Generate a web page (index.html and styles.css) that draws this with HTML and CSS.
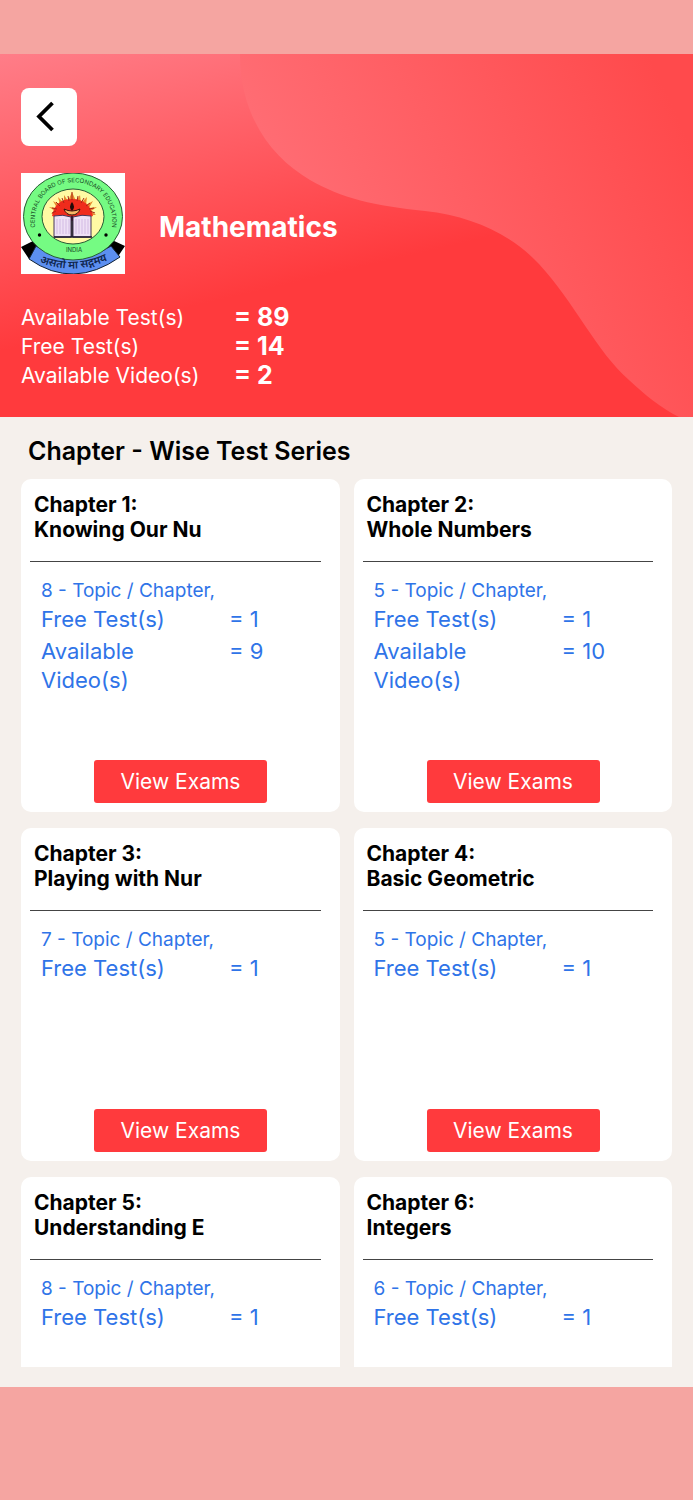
FILE: index.html
```
<!DOCTYPE html>
<html lang="en">
<head>
<meta charset="utf-8">
<meta name="viewport" content="width=device-width, initial-scale=1">
<title>Mathematics</title>
<link rel="stylesheet" href="styles.css">
</head>
<body>
<header class="hero">
  <svg class="hero-art" viewBox="0 0 693 363" preserveAspectRatio="none" aria-hidden="true">
    <defs>
      <linearGradient id="base" gradientUnits="userSpaceOnUse" x1="0" y1="0" x2="66" y2="282">
        <stop offset="0" stop-color="#ff7d88"/><stop offset="1" stop-color="#ff3a3d"/>
      </linearGradient>
      <linearGradient id="wave" gradientUnits="userSpaceOnUse" x1="290" y1="140" x2="640" y2="-20">
        <stop offset="0" stop-color="#ff6c73"/><stop offset="1" stop-color="#ff4a4c"/>
      </linearGradient>
    </defs>
    <path fill="url(#base)" d="M0 0H693V363H0Z"/>
    <path fill="url(#wave)" d="M240 0C240 65 274 105 310 126C341 144 375 152 425 157C472 162 512 181 539 210C575 249 596 297 629 326C645 341 661 354 679 363H693V0Z"/>
  </svg>
  <button class="back" type="button" aria-label="Back">
    <svg viewBox="0 0 56 58" aria-hidden="true"><path d="M31.500 15L18 28.500L31.500 42" fill="none" stroke="#000" stroke-width="3.800"/></svg>
  </button>
  <div class="subject">
    <svg class="crest" viewBox="0 0 104 101" role="img" aria-label="Central Board of Secondary Education">
      <defs>
        <path id="arc" d="M14 55C8 -6 97 -6 91 55"/>
        <path id="ribbon" d="M15 88Q52 104 90 86"/>
      </defs>
      <path fill="#fff" d="M0 0H104V101H0Z"/>
      <path d="M0 74L14 67L20 82L8 86ZM104 73L91 67L84 82L96 85Z"/>
      <path d="M15 73Q52 98 90 73L99 84Q52 117 8 86Z" fill="#5c8ff0" stroke="#123" stroke-width="1"/>
      <ellipse cx="52" cy="43.500" rx="49.500" ry="43.500" fill="#75fb83" stroke="#285b35" stroke-width="1"/>
      <ellipse cx="52" cy="43.500" rx="31" ry="27.500" fill="#fffaa4" stroke="#285b35" stroke-width="1"/>
      <path d="M30 41L34 38L28 34L36 35L32 28L39 32L37 24L43 30L43 22L47 28L51 19L55 28L59 22L60 30L66 24L65 32L72 28L68 35L76 34L70 38L75 42Z" fill="#e88a2f"/>
      <path d="M31 43Q34 26 51 26T72 43L52 48Z" fill="#f02b1c"/>
      <path d="M31 40L35 38M31 35L36 36M35 29L39 33M41 25L43 30M47 23L48 28M51 19V27M57 23L56 28M63 25L60 30M69 30L65 33M73 35L68 36M74 40L69 38" stroke="#a62616" stroke-width="1"/>
      <path d="M43 36Q51 40 59 36Q57 42 51 42T43 36Z" fill="#f7b866" stroke="#32120a" stroke-width="1"/>
      <path d="M51 29Q55 34 51 38Q47 34 51 29Z" fill="#210a08"/>
      <path d="M33 43Q42 41 50 44V64H33ZM52 44Q61 41 70 43V64H52Z" fill="#eee0f5" stroke="#453457" stroke-width="1"/>
      <path d="M36 46V61M39 46V61M42 46V61M45 46V61M48 46V61M55 46V61M58 46V61M61 46V61M64 46V61M67 46V61" stroke="#c5a9dd" stroke-width=".7"/>
      <path d="M51 43V64M33 64H71" stroke="#1c1730" stroke-width="1.600"/>
      <circle cx="18.500" cy="62" r="1.700"/><circle cx="85" cy="62" r="1.700"/>
      <text class="crest-text"><textPath href="#arc" startOffset="50%" text-anchor="middle">CENTRAL BOARD OF SECONDARY EDUCATION</textPath></text>
      <text class="crest-text" x="53" y="79" text-anchor="middle">INDIA</text>
      <text class="crest-motto"><textPath href="#ribbon" startOffset="50%" text-anchor="middle">असतो मा सद्गमय</textPath></text>
    </svg>
    <h1 class="subject-name">Mathematics</h1>
  </div>
  <dl class="stats">
    <dt>Available Test(s)</dt><dd>= 89</dd>
    <dt>Free Test(s)</dt><dd>= 14</dd>
    <dt>Available Video(s)</dt><dd>= 2</dd>
  </dl>
</header>
<main class="content">
  <h2 class="section-title">Chapter - Wise Test Series</h2>
  <div class="chapters">
    <article class="card">
      <h3 class="card-title">Chapter 1:<br>Knowing Our Nu</h3>
      <p class="topics">8 - Topic / Chapter,</p>
      <dl class="facts"><dt>Free Test(s)</dt><dd>= 1</dd><dt>Available Video(s)</dt><dd>= 9</dd></dl>
      <button class="view" type="button">View Exams</button>
    </article>
    <article class="card">
      <h3 class="card-title">Chapter 2:<br>Whole Numbers</h3>
      <p class="topics">5 - Topic / Chapter,</p>
      <dl class="facts"><dt>Free Test(s)</dt><dd>= 1</dd><dt>Available Video(s)</dt><dd>= 10</dd></dl>
      <button class="view" type="button">View Exams</button>
    </article>
    <article class="card">
      <h3 class="card-title">Chapter 3:<br>Playing with Nur</h3>
      <p class="topics">7 - Topic / Chapter,</p>
      <dl class="facts"><dt>Free Test(s)</dt><dd>= 1</dd></dl>
      <button class="view" type="button">View Exams</button>
    </article>
    <article class="card">
      <h3 class="card-title">Chapter 4:<br>Basic Geometric</h3>
      <p class="topics">5 - Topic / Chapter,</p>
      <dl class="facts"><dt>Free Test(s)</dt><dd>= 1</dd></dl>
      <button class="view" type="button">View Exams</button>
    </article>
    <article class="card">
      <h3 class="card-title">Chapter 5:<br>Understanding E</h3>
      <p class="topics">8 - Topic / Chapter,</p>
      <dl class="facts"><dt>Free Test(s)</dt><dd>= 1</dd></dl>
    </article>
    <article class="card">
      <h3 class="card-title">Chapter 6:<br>Integers</h3>
      <p class="topics">6 - Topic / Chapter,</p>
      <dl class="facts"><dt>Free Test(s)</dt><dd>= 1</dd></dl>
    </article>
  </div>
</main>
</body>
</html>
```
FILE: styles.css
```
* { box-sizing: border-box; }
body {
  margin: 0;
  height: 100vh;
  padding: 54px 0 113px;
  display: flex;
  flex-direction: column;
  background: #f5a5a1;
  color: #000;
  font-family: Inter, "Liberation Sans", sans-serif;
}
h1, h2, h3, p, dl, dd { margin: 0; }
button { border: 0; padding: 0; font: inherit; cursor: pointer; }

.hero {
  position: relative;
  flex: none;
  padding: 34px 21px 27px;
  color: #fff;
  isolation: isolate;
}
.hero-art { position: absolute; inset: 0; width: 100%; height: 100%; z-index: -1; }
.back { display: block; width: 56px; height: 58px; border-radius: 8px; background: #fff; }
.back svg { display: block; width: 100%; }
.subject { display: flex; align-items: center; gap: 34px; margin-top: 27px; }
.crest { flex: none; width: 104px; height: 101px; }
.crest-text { font-size: 6px; fill: #174a25; }
.crest-motto { font-family: "Noto Sans", "Noto Sans Devanagari", sans-serif; font-size: 11px; font-weight: 600; fill: #10264e; }
.subject-name { padding-top: 7px; font-size: 28px; line-height: 34px; font-weight: 700; }
.stats { display: grid; grid-template-columns: 213px 1fr; margin-top: 29px; line-height: 29px; }
.stats dt { font-size: 21px; font-weight: 400; }
.stats dd { font-size: 25px; font-weight: 700; }

.content {
  flex: 1;
  min-height: 0;
  display: flex;
  flex-direction: column;
  padding: 19px 21px 20px;
  background: #f5f0ec;
}
.section-title { margin: 0 7px 13px; font-size: 25px; line-height: 30px; font-weight: 600; }
.chapters {
  flex: 1;
  min-height: 0;
  overflow: hidden;
  display: grid;
  grid-template-columns: 1fr 1fr;
  grid-auto-rows: 333px;
  gap: 16px 14px;
}
.card {
  display: flex;
  flex-direction: column;
  padding: 13px 19px 9px 9px;
  border-radius: 10px;
  background: #fff;
}
.card-title {
  padding-left: 4px;
  font-size: 21px;
  line-height: 25px;
  font-weight: 700;
}
.topics {
  margin-top: 19px;
  padding: 15px 0 0 11px;
  border-top: 1px solid #444;
  color: #2f74e8;
  font-size: 19px;
  line-height: 28px;
}
.facts {
  display: grid;
  grid-template-columns: 136px 1fr;
  column-gap: 52px;
  row-gap: 3px;
  padding-left: 11px;
  color: #2f74e8;
  font-size: 22px;
  line-height: 29px;
}
.view {
  width: 173px;
  height: 43px;
  margin: auto 0 0 64px;
  border-radius: 3px;
  background: #ff3a3d;
  color: #fff;
  font-size: 21px;
  font-weight: 400;
}
```
